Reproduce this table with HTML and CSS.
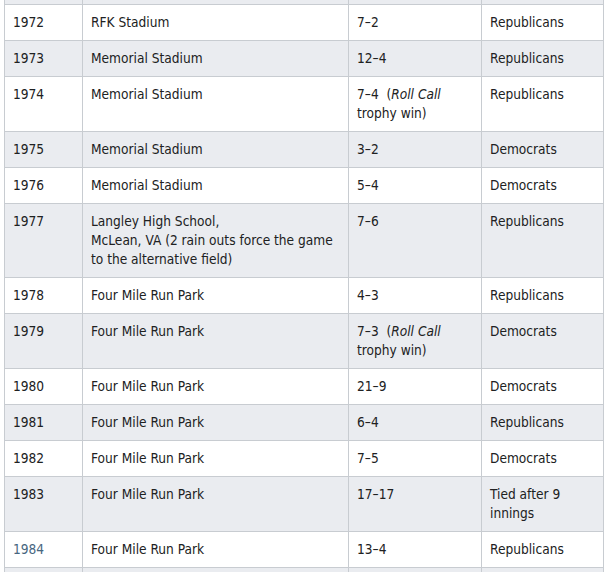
FILE: index.html
```html
<!DOCTYPE html>
<html lang="en">
<head>
<meta charset="utf-8">
<title>Congressional Baseball Game results</title>
<link rel="stylesheet" href="styles.css">
</head>
<body>
<table class="results">
  <tbody>
    <tr class="spacer"><td></td><td></td><td></td><td></td></tr>
    <tr><td>1972</td><td>RFK Stadium</td><td>7–2</td><td>Republicans</td></tr>
    <tr><td>1973</td><td>Memorial Stadium</td><td>12–4</td><td>Republicans</td></tr>
    <tr><td>1974</td><td>Memorial Stadium</td><td>7–4&nbsp; (<i>Roll Call</i> trophy win)</td><td>Republicans</td></tr>
    <tr><td>1975</td><td>Memorial Stadium</td><td>3–2</td><td>Democrats</td></tr>
    <tr><td>1976</td><td>Memorial Stadium</td><td>5–4</td><td>Democrats</td></tr>
    <tr><td>1977</td><td>Langley High School,<br>McLean, VA (2 rain outs force the game to the alternative field)</td><td>7–6</td><td>Republicans</td></tr>
    <tr><td>1978</td><td>Four Mile Run Park</td><td>4–3</td><td>Republicans</td></tr>
    <tr><td>1979</td><td>Four Mile Run Park</td><td>7–3&nbsp; (<i>Roll Call</i> trophy win)</td><td>Democrats</td></tr>
    <tr><td>1980</td><td>Four Mile Run Park</td><td>21–9</td><td>Democrats</td></tr>
    <tr><td>1981</td><td>Four Mile Run Park</td><td>6–4</td><td>Republicans</td></tr>
    <tr><td>1982</td><td>Four Mile Run Park</td><td>7–5</td><td>Democrats</td></tr>
    <tr><td>1983</td><td>Four Mile Run Park</td><td>17–17</td><td>Tied after 9 innings</td></tr>
    <tr><td><a class="yr" href="#">1984</a></td><td>Four Mile Run Park</td><td>13–4</td><td>Republicans</td></tr>
    <tr class="spacer"><td></td><td></td><td></td><td></td></tr>
  </tbody>
</table>
</body>
</html>
```
FILE: styles.css
```css
html, body {
  margin: 0;
  padding: 0;
  background: #ffffff;
}
body {
  font-family: "DejaVu Sans Condensed", "DejaVu Sans", sans-serif;
  font-size: 13.6px;
  line-height: 19px;
  color: #202122;
  padding-left: 4px;
  overflow: hidden;
}
.results {
  border-collapse: collapse;
  table-layout: fixed;
  width: 600px;
  margin-top: -13px;
}
.results td {
  border: 1px solid #c8ccd1;
  padding: 8px 8px 8px 8px;
  vertical-align: top;
  text-align: left;
}
.results td:nth-child(1) { width: 61px; }
.results td:nth-child(2) { width: 249px; }
.results td:nth-child(3) { width: 116px; }
.results td:nth-child(4) { width: 105px; }
.results tr:nth-child(odd) td { background: #eaecf0; }
.results tr:nth-child(even) td { background: #ffffff; }
.results tr.spacer td {
  height: 0;
  padding: 8px 8px 8px 8px;
}
.yr {
  color: #47667f;
  text-decoration: none;
}
i { font-style: italic; }
```
